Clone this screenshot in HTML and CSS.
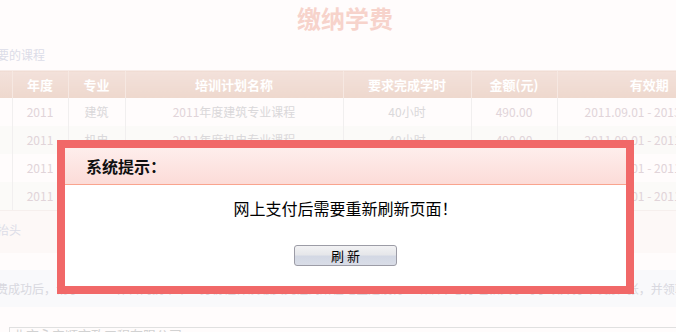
FILE: index.html
```html
<!DOCTYPE html>
<html lang="zh-CN">
<head>
    <meta charset="UTF-8">
    <meta name="viewport" content="width=device-width, initial-scale=1.0">
    <title>缴纳学费</title>
    <link rel="stylesheet" href="styles.css">
</head>
<body>
    <div class="page">
        <h1 class="page-title">缴纳学费</h1>
        <p class="sub-title">您需要的课程</p>

        <table class="course-table">
            <colgroup>
                <col class="c-check">
                <col class="c-year">
                <col class="c-major">
                <col class="c-name">
                <col class="c-hours">
                <col class="c-money">
                <col class="c-date">
            </colgroup>
            <thead>
                <tr>
                    <th></th>
                    <th>年度</th>
                    <th>专业</th>
                    <th>培训计划名称</th>
                    <th>要求完成学时</th>
                    <th>金额(元)</th>
                    <th>有效期</th>
                </tr>
            </thead>
            <tbody>
                <tr>
                    <td></td>
                    <td class="num">2011</td>
                    <td>建筑</td>
                    <td><span class="num">2011</span>年度建筑专业课程</td>
                    <td>40小时</td>
                    <td class="num">490.00</td>
                    <td class="num">2011.09.01 - 2013.09.01</td>
                </tr>
                <tr>
                    <td></td>
                    <td class="num">2011</td>
                    <td>机电</td>
                    <td><span class="num">2011</span>年度机电专业课程</td>
                    <td>40小时</td>
                    <td class="num">490.00</td>
                    <td class="num">2011.09.01 - 2011.12.31</td>
                </tr>
                <tr>
                    <td></td>
                    <td class="num">2011</td>
                    <td>市政</td>
                    <td><span class="num">2011</span>年度市政专业课程</td>
                    <td>40小时</td>
                    <td class="num">490.00</td>
                    <td class="num">2011.09.01 - 2011.12.31</td>
                </tr>
                <tr>
                    <td></td>
                    <td class="num">2011</td>
                    <td>公路</td>
                    <td><span class="num">2011</span>年度公路专业课程</td>
                    <td>40小时</td>
                    <td class="num">490.00</td>
                    <td class="num">2011.09.01 - 2011.12.31</td>
                </tr>
            </tbody>
        </table>

        <div class="invoice-row">发票抬头</div>

        <div class="notice-row">缴费成功后，请于三个工作日内携带本人身份证件及缴费凭证到所在地区建设行业培训中心办理相关学习手续并打印发票1张，并领取证书</div>

        <div class="company-row">
            <div class="company-input">北京永安顺市政工程有限公司</div>
        </div>
    </div>

    <div class="dialog">
        <div class="dialog-header">系统提示：</div>
        <div class="dialog-body">
            <p class="dialog-message">网上支付后需要重新刷新页面！</p>
            <button class="dialog-button" type="button">刷 新</button>
        </div>
    </div>
</body>
</html>
```

FILE: styles.css
```css
* {
    margin: 0;
    padding: 0;
    box-sizing: border-box;
}

html, body {
    width: 676px;
    height: 332px;
    overflow: hidden;
}

body {
    font-family: "Noto Sans CJK SC", "Liberation Sans", sans-serif;
    font-size: 12px;
    background: #fffcfc;
    position: relative;
}

/* page is scrolled a bit to the right, so it starts left of the window */
.page {
    width: 781px;
    margin-left: -40px;
}

.page-title {
    height: 40px;
    line-height: 35px;
    text-align: center;
    padding-right: 11px;
    font-size: 24px;
    font-weight: 700;
    color: #f7d3cb;
}

.sub-title {
    height: 30px;
    line-height: 30px;
    padding-left: 13px;
    color: #dcdde8;
}

.course-table {
    width: 781px;
    table-layout: fixed;
    border-collapse: collapse;
}

.c-check { width: 52px; }
.c-year { width: 56px; }
.c-major { width: 57px; }
.c-name { width: 218px; }
.c-hours { width: 128px; }
.c-money { width: 86px; }
.c-date { width: 184px; }

.course-table th {
    height: 27px;
    background: linear-gradient(#f3e1db, #eed8cd);
    border-top: 1px solid #f7ebe7;
    border-left: 1px solid #f6e8e2;
    color: #ffffff;
    font-size: 13px;
    font-weight: 700;
    text-align: center;
}

.course-table td {
    height: 28px;
    border-left: 1px solid #f1efef;
    text-align: center;
    color: #dad8da;
    white-space: nowrap;
    overflow: hidden;
}

.course-table th:first-child,
.course-table td:first-child {
    border-left: none;
}

.course-table tbody tr:nth-child(even) td {
    background: #fbfaf8;
}

.course-table .num {
    color: #e1d4d9;
}

.invoice-row {
    height: 43px;
    padding-top: 9px;
    padding-left: 13px;
    line-height: 20px;
    background: #fdf8f7;
    border-top: 1px solid #f6efed;
    color: #dcdde8;
}

.notice-row {
    margin-top: 17px;
    height: 37px;
    line-height: 37px;
    padding-left: 24px;
    background: #f9f9fb;
    color: #d8d8df;
    white-space: nowrap;
    overflow: hidden;
    width: 716px;
}

.company-row {
    margin-top: 20px;
    padding-left: 49px;
}

.company-input {
    width: 732px;
    height: 24px;
    border: 1px solid #e0e0e0;
    padding: 0 3px;
    line-height: 14px;
    color: #d2d2d2;
    font-size: 13px;
}

/* modal dialog over the page */
.dialog {
    position: absolute;
    left: 57px;
    top: 140px;
    width: 577px;
    height: 154px;
    border: 8px solid #f16868;
    background: #ffffff;
}

.dialog-header {
    height: 37px;
    line-height: 36px;
    padding-left: 21px;
    background: linear-gradient(#feeeec, #fcdcd8);
    border-bottom: 1px solid #f9a48e;
    font-size: 16px;
    font-weight: 700;
    color: #111111;
}

.dialog-body {
    display: flex;
    flex-direction: column;
    align-items: center;
    padding-top: 13px;
}

.dialog-message {
    line-height: 20px;
    font-size: 16px;
    color: #000000;
}

.dialog-button {
    margin-top: 27px;
    width: 103px;
    height: 21px;
    border: 1px solid #9c9ca6;
    border-radius: 3px;
    background: linear-gradient(#f2f2f4 0%, #e6e7ea 45%, #d3d8e4 55%, #d9dde7 100%);
    font-family: "Noto Sans CJK SC", sans-serif;
    font-size: 13px;
    line-height: 18px;
    color: #000000;
}
```
